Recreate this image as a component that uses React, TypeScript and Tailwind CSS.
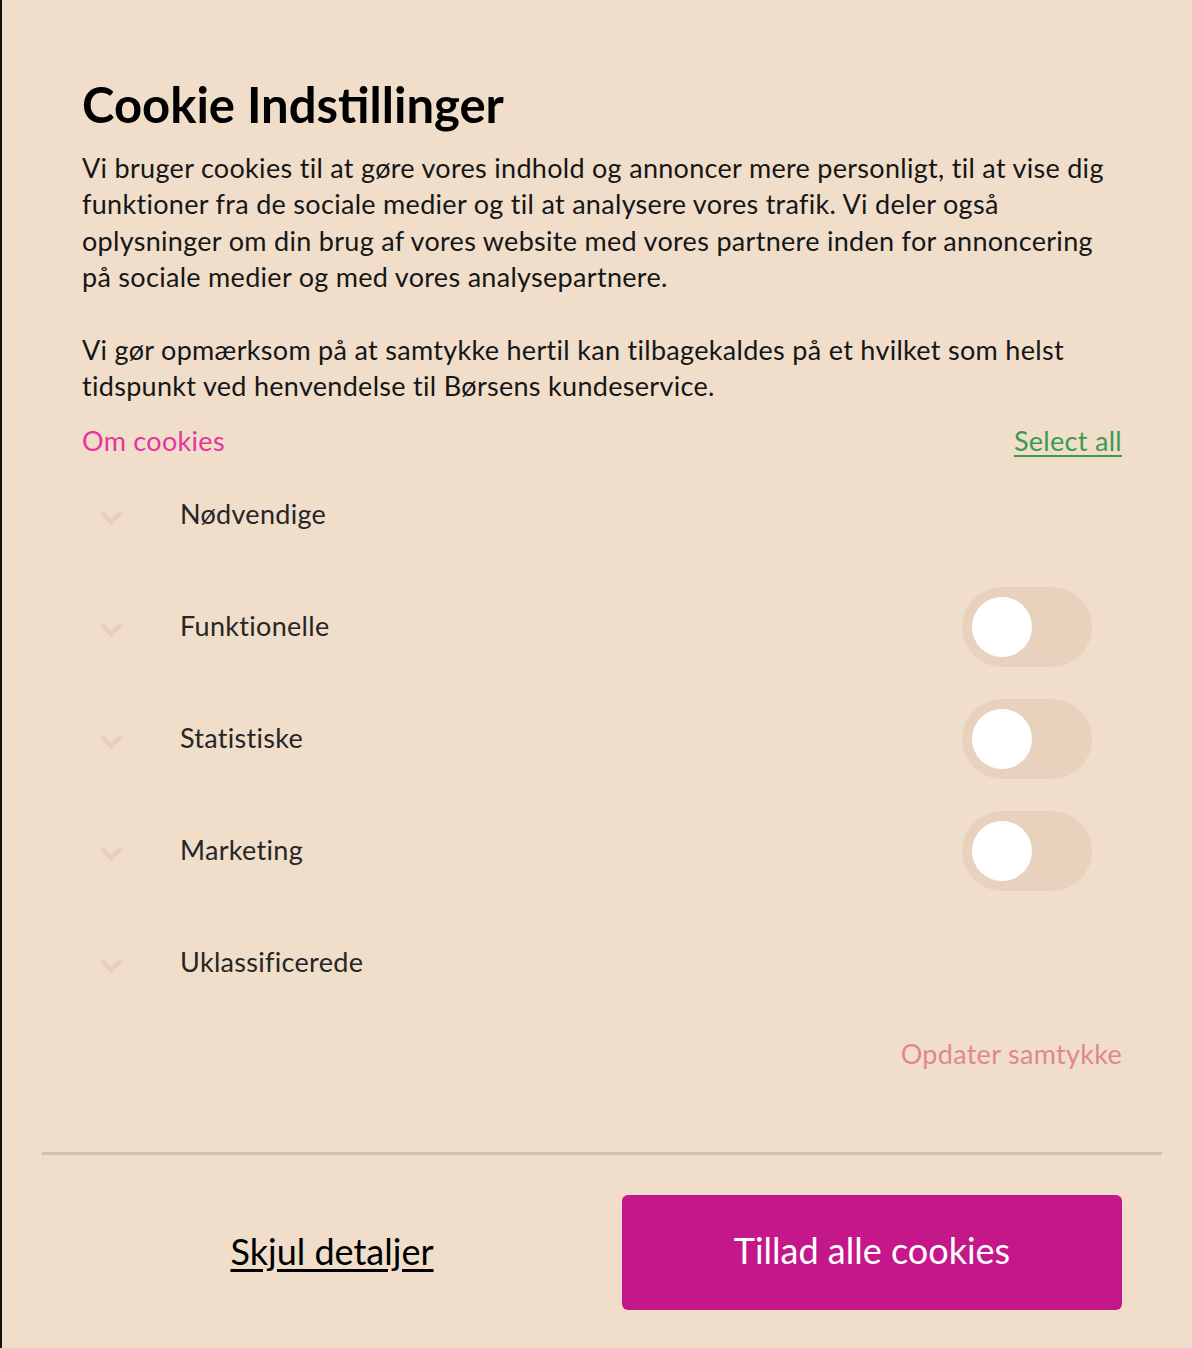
import { useState } from "react";

const categories = [
  { name: "Nødvendige", toggle: false },
  { name: "Funktionelle", toggle: true },
  { name: "Statistiske", toggle: true },
  { name: "Marketing", toggle: true },
  { name: "Uklassificerede", toggle: false },
];

function Chevron() {
  return (
    <svg width="24" height="16" viewBox="0 0 24 16" className="text-[#e9cfbb]">
      <path d="M2.5 3.5l9.5 9.5 9.5-9.5" fill="none" stroke="currentColor" strokeWidth="5" />
    </svg>
  );
}

function Toggle({ on, onClick }: { on: boolean; onClick: () => void }) {
  return (
    <button
      onClick={onClick}
      className={`flex h-[80px] w-[130px] items-center rounded-full px-[10px] ${
        on ? "justify-end bg-[#3a9c50]" : "justify-start bg-[#e9d2bd]"
      }`}
    >
      <span className="block h-[60px] w-[60px] rounded-full bg-white" />
    </button>
  );
}

export default function App() {
  const [state, setState] = useState<Record<string, boolean>>({});

  return (
    <div className="flex h-[1348px] w-[1192px] overflow-hidden bg-[#f0deca] font-['Lato',sans-serif]">
      <div className="w-[2px] shrink-0 bg-[#15110e]" />
      <div className="flex-1 pl-[80px] pr-[70px] pt-[74px]">
        <h1 className="text-[49px] font-bold leading-[60px] text-black">Cookie Indstillinger</h1>
        <div className="mt-[16px] text-[27px] leading-[36.4px] tracking-[0.3px] text-[#161616]">
          <p>
            Vi bruger cookies til at gøre vores indhold og annoncer mere personligt, til at vise dig
            <br />
            funktioner fra de sociale medier og til at analysere vores trafik. Vi deler også
            <br />
            oplysninger om din brug af vores website med vores partnere inden for annoncering
            <br />
            på sociale medier og med vores analysepartnere.
          </p>
          <p className="mt-[36px]">
            Vi gør opmærksom på at samtykke hertil kan tilbagekaldes på et hvilket som helst
            <br />
            tidspunkt ved henvendelse til Børsens kundeservice.
          </p>
        </div>

        <div className="mt-[19px] flex items-center justify-between text-[27px] leading-[36px] tracking-[0.3px]">
          <a href="#" className="text-[#e8339f]">
            Om cookies
          </a>
          <a href="#" className="text-[#3a9c50] underline underline-offset-4">
            Select all
          </a>
        </div>

        <ul>
          {categories.map((c) => (
            <li key={c.name} className="flex h-[112px] items-center pb-[3px]">
              <div className="flex w-[98px] justify-start pl-[17px] pt-[6px]">
                <Chevron />
              </div>
              <span className="flex-1 text-[27px] tracking-[0.3px] text-[#262626]">{c.name}</span>
              {c.toggle && (
                <div className="mr-[30px] mt-[3px]">
                  <Toggle
                    on={!!state[c.name]}
                    onClick={() => setState((s) => ({ ...s, [c.name]: !s[c.name] }))}
                  />
                </div>
              )}
            </li>
          ))}
        </ul>

        <div className="mt-[17px] flex justify-end text-[27px] leading-[36px] tracking-[0.3px]">
          <button className="text-[#e0888a]">Opdater samtykke</button>
        </div>

        <div className="-ml-[40px] -mr-[40px] mt-[80px] h-[3px] bg-[#d2bfae]" />

        <div className="mt-[40px] flex items-center">
          <div className="flex flex-1 justify-center pb-[4px] pr-[40px]">
            <a href="#" className="text-[36px] text-black underline underline-offset-[4px]">
              Skjul detaljer
            </a>
          </div>
          <button className="h-[115px] w-[500px] rounded-[6px] bg-[#c4178a] pb-[5px] text-[36px] text-white">
            Tillad alle cookies
          </button>
        </div>
      </div>
    </div>
  );
}
